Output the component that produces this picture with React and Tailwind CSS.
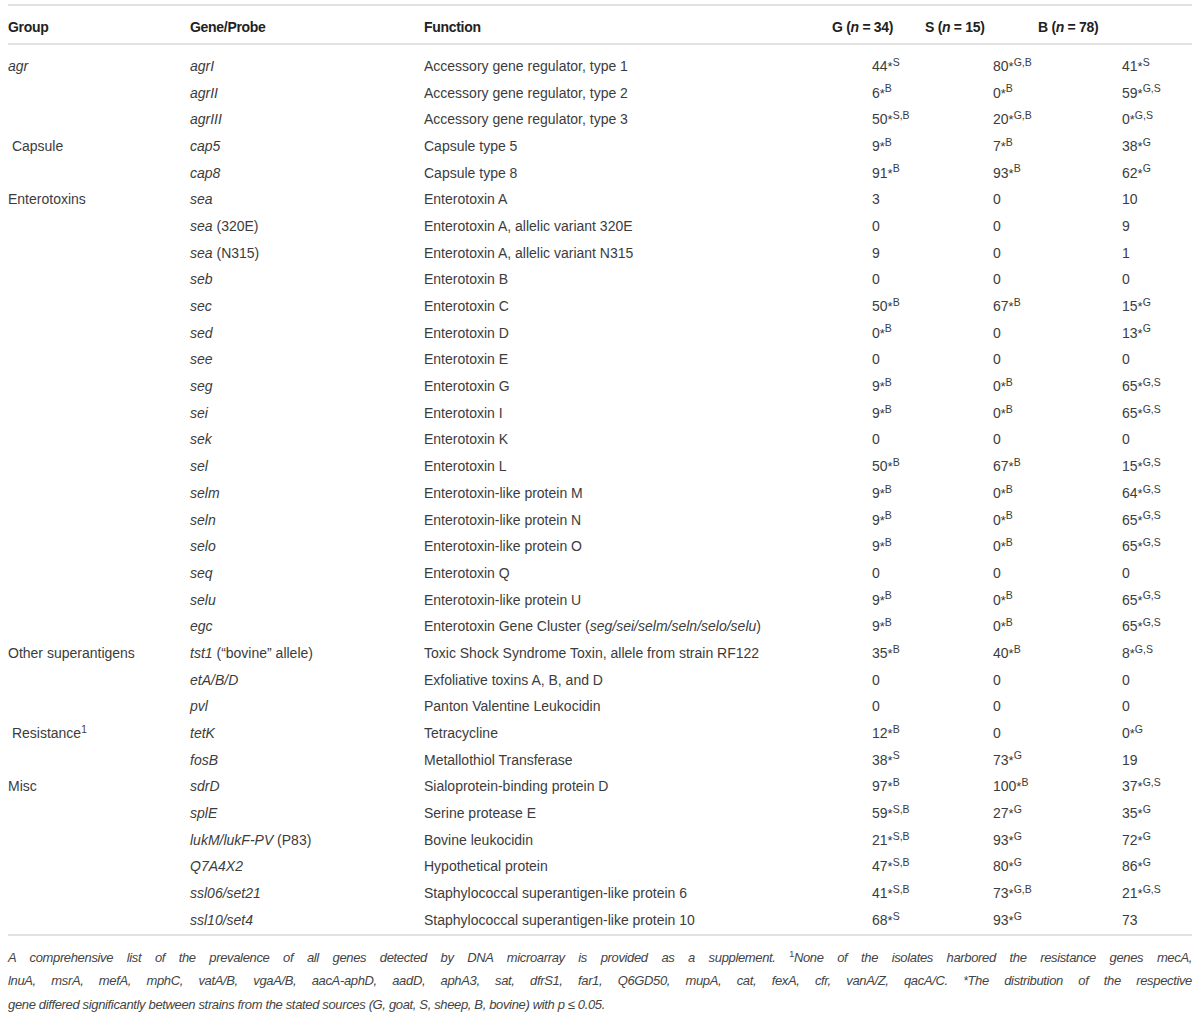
const rows = [
  { group: "agr", groupItalic: true, gene: "agrI", fn: "Accessory gene regulator, type 1", g: "44*S", s: "80*G,B", b: "41*S" },
  { gene: "agrII", fn: "Accessory gene regulator, type 2", g: "6*B", s: "0*B", b: "59*G,S" },
  { gene: "agrIII", fn: "Accessory gene regulator, type 3", g: "50*S,B", s: "20*G,B", b: "0*G,S" },
  { group: " Capsule", gene: "cap5", fn: "Capsule type 5", g: "9*B", s: "7*B", b: "38*G" },
  { gene: "cap8", fn: "Capsule type 8", g: "91*B", s: "93*B", b: "62*G" },
  { group: "Enterotoxins", gene: "sea", fn: "Enterotoxin A", g: "3", s: "0", b: "10" },
  { gene: "sea", extra: " (320E)", fn: "Enterotoxin A, allelic variant 320E", g: "0", s: "0", b: "9" },
  { gene: "sea", extra: " (N315)", fn: "Enterotoxin A, allelic variant N315", g: "9", s: "0", b: "1" },
  { gene: "seb", fn: "Enterotoxin B", g: "0", s: "0", b: "0" },
  { gene: "sec", fn: "Enterotoxin C", g: "50*B", s: "67*B", b: "15*G" },
  { gene: "sed", fn: "Enterotoxin D", g: "0*B", s: "0", b: "13*G" },
  { gene: "see", fn: "Enterotoxin E", g: "0", s: "0", b: "0" },
  { gene: "seg", fn: "Enterotoxin G", g: "9*B", s: "0*B", b: "65*G,S" },
  { gene: "sei", fn: "Enterotoxin I", g: "9*B", s: "0*B", b: "65*G,S" },
  { gene: "sek", fn: "Enterotoxin K", g: "0", s: "0", b: "0" },
  { gene: "sel", fn: "Enterotoxin L", g: "50*B", s: "67*B", b: "15*G,S" },
  { gene: "selm", fn: "Enterotoxin-like protein M", g: "9*B", s: "0*B", b: "64*G,S" },
  { gene: "seln", fn: "Enterotoxin-like protein N", g: "9*B", s: "0*B", b: "65*G,S" },
  { gene: "selo", fn: "Enterotoxin-like protein O", g: "9*B", s: "0*B", b: "65*G,S" },
  { gene: "seq", fn: "Enterotoxin Q", g: "0", s: "0", b: "0" },
  { gene: "selu", fn: "Enterotoxin-like protein U", g: "9*B", s: "0*B", b: "65*G,S" },
  {
    gene: "egc",
    fn: (
      <>
        Enterotoxin Gene Cluster (<i>seg/sei/selm/seln/selo/selu</i>)
      </>
    ),
    g: "9*B", s: "0*B", b: "65*G,S",
  },
  { group: "Other superantigens", gene: "tst1", extra: " (“bovine” allele)", fn: "Toxic Shock Syndrome Toxin, allele from strain RF122", g: "35*B", s: "40*B", b: "8*G,S" },
  { gene: "etA/B/D", fn: "Exfoliative toxins A, B, and D", g: "0", s: "0", b: "0" },
  { gene: "pvl", fn: "Panton Valentine Leukocidin", g: "0", s: "0", b: "0" },
  { group: " Resistance", groupSup: "1", gene: "tetK", fn: "Tetracycline", g: "12*B", s: "0", b: "0*G" },
  { gene: "fosB", fn: "Metallothiol Transferase", g: "38*S", s: "73*G", b: "19" },
  { group: "Misc", gene: "sdrD", fn: "Sialoprotein-binding protein D", g: "97*B", s: "100*B", b: "37*G,S" },
  { gene: "splE", fn: "Serine protease E", g: "59*S,B", s: "27*G", b: "35*G" },
  { gene: "lukM/lukF-PV", extra: " (P83)", fn: "Bovine leukocidin", g: "21*S,B", s: "93*G", b: "72*G" },
  { gene: "Q7A4X2", fn: "Hypothetical protein", g: "47*S,B", s: "80*G", b: "86*G" },
  { gene: "ssl06/set21", fn: "Staphylococcal superantigen-like protein 6", g: "41*S,B", s: "73*G,B", b: "21*G,S" },
  { gene: "ssl10/set4", fn: "Staphylococcal superantigen-like protein 10", g: "68*S", s: "93*G", b: "73" },
];

function Val({ v }) {
  const [num, mark] = v.split("*");
  return (
    <span>
      {num}
      {mark && (
        <>
          <span className="text-[13px]">*</span>
          <sup className="text-[10.5px]">{mark}</sup>
        </>
      )}
    </span>
  );
}

const cols = "grid grid-cols-[182px_234px_408px_93px_113px_1fr]";

export default function App() {
  return (
    <div className="w-[1200px] h-[1016px] bg-white px-2 pt-1 font-['Liberation_Sans',Arial,sans-serif] text-[14px] text-[#3c3c3c] overflow-hidden">
      {/* Header */}
      <div className={`${cols} h-[41px] pt-[6px] items-center border-t-2 border-b-2 border-[#e2e2e2] font-bold text-[#222] tracking-[-0.3px]`}>
        <div>Group</div>
        <div>Gene/Probe</div>
        <div>Function</div>
        <div>
          G (<i>n</i> = 34)
        </div>
        <div>
          S (<i>n</i> = 15)
        </div>
        <div>
          B (<i>n</i> = 78)
        </div>
      </div>

      {/* Body */}
      <div className="pt-[8px] border-b-2 border-[#e2e2e2]">
        {rows.map((r, i) => (
          <div key={i} className={`${cols} h-[26.7px] items-center whitespace-pre`}>
            <div className={r.groupItalic ? "italic" : ""}>
              {r.group}
              {r.groupSup && <sup className="text-[10px]">{r.groupSup}</sup>}
            </div>
            <div>
              <i>{r.gene}</i>
              {r.extra}
            </div>
            <div>{r.fn}</div>
            <div className="pl-[40px]">
              <Val v={r.g} />
            </div>
            <div className="pl-[68px]">
              <Val v={r.s} />
            </div>
            <div className="pl-[84px]">
              <Val v={r.b} />
            </div>
          </div>
        ))}
      </div>

      {/* Footnote */}
      <div className="pt-[10px] italic text-[13px] tracking-[-0.35px] leading-[23px] text-[#444]">
        <p className="text-justify [text-align-last:justify]">
          A comprehensive list of the prevalence of all genes detected by DNA microarray is provided as a supplement. <sup className="not-italic text-[9px]">1</sup>None of the isolates harbored the resistance genes mecA,
        </p>
        <p className="text-justify [text-align-last:justify]">
          lnuA, msrA, mefA, mphC, vatA/B, vgaA/B, aacA-aphD, aadD, aphA3, sat, dfrS1, far1, Q6GD50, mupA, cat, fexA, cfr, vanA/Z, qacA/C. <span className="text-[12px]">*</span>The distribution of the respective
        </p>
        <p>
          gene differed significantly between strains from the stated sources (G, goat, S, sheep, B, bovine) with <i>p</i> ≤ 0.05.
        </p>
      </div>
    </div>
  );
}
